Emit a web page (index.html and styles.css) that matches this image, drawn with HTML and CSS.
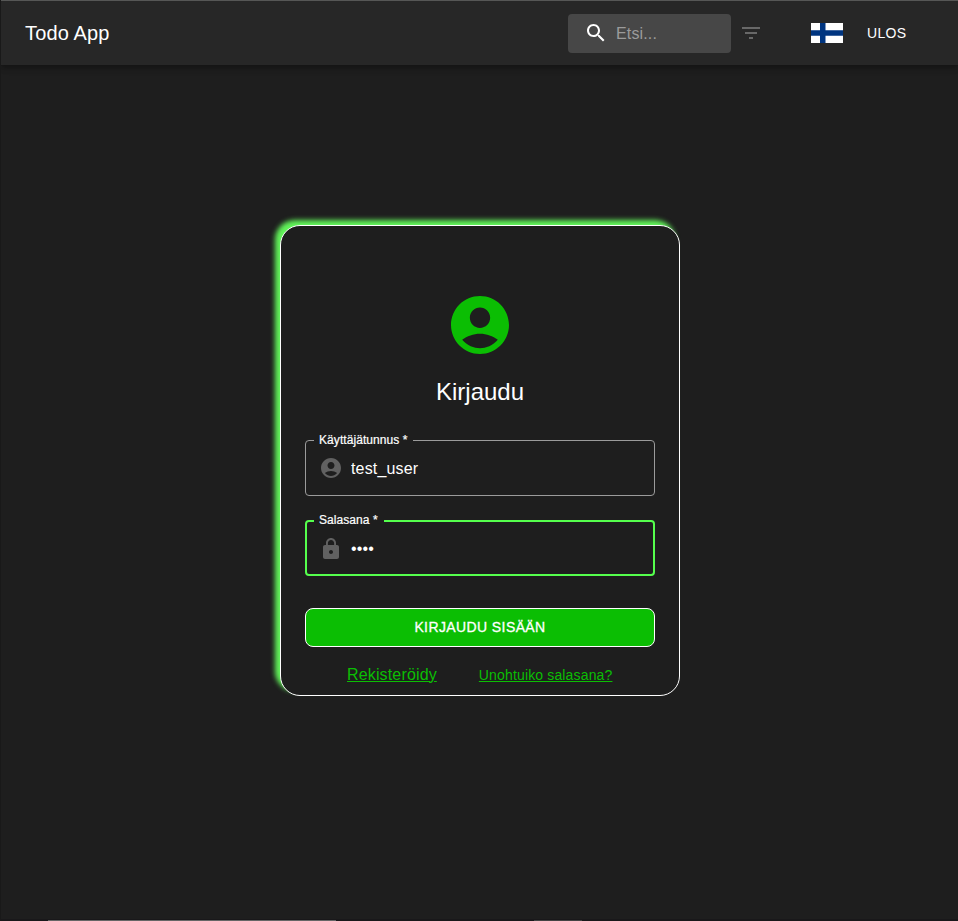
FILE: index.html
```html
<!DOCTYPE html>
<html lang="fi">
<head>
<meta charset="utf-8">
<title>Todo App</title>
<link rel="stylesheet" href="styles.css">
</head>
<body>
<header class="appbar">
  <h1 class="brand">Todo App</h1>
  <div class="search">
    <svg class="icon" viewBox="0 0 24 24"><path d="M15.5 14h-.79l-.28-.27C15.41 12.59 16 11.11 16 9.5 16 5.91 13.09 3 9.5 3S3 5.91 3 9.5 5.91 16 9.5 16c1.61 0 3.09-.59 4.23-1.57l.27.28v.79l5 4.99L20.49 19l-4.99-5zm-6 0C7.01 14 5 11.99 5 9.5S7.01 5 9.5 5 14 7.01 14 9.5 11.99 14 9.5 14z"/></svg>
    <span class="placeholder">Etsi...</span>
  </div>
  <svg class="icon filter" viewBox="0 0 24 24"><path d="M10 18h4v-2h-4v2zM3 6v2h18V6H3zm3 7h12v-2H6v2z"/></svg>
  <svg class="flag" viewBox="0 0 32 20"><path fill="#fff" d="M0 0h32v20H0z"/><path fill="#003580" d="M9 0h5.500v20H9zM0 7.300h32v5.400H0z"/></svg>
  <span class="logout">ULOS</span>
</header>
<main class="page">
  <section class="card">
    <svg class="avatar" viewBox="2 2 20 20"><path d="M12 2C6.480 2 2 6.480 2 12s4.480 10 10 10 10-4.480 10-10S17.520 2 12 2zm0 4c1.930 0 3.500 1.570 3.500 3.500S13.930 13 12 13s-3.500-1.570-3.500-3.500S10.070 6 12 6zm0 14c-2.030 0-4.430-.820-6.140-2.880C7.550 15.800 9.680 15 12 15s4.450.800 6.140 2.120C16.430 19.180 14.030 20 12 20z"/></svg>
    <h2 class="title">Kirjaudu</h2>
    <fieldset class="field">
      <legend>Käyttäjätunnus *</legend>
      <svg class="icon" viewBox="0 0 24 24"><path d="M12 2C6.480 2 2 6.480 2 12s4.480 10 10 10 10-4.480 10-10S17.520 2 12 2zm0 4c1.930 0 3.500 1.570 3.500 3.500S13.930 13 12 13s-3.500-1.570-3.500-3.500S10.070 6 12 6zm0 14c-2.030 0-4.430-.820-6.140-2.880C7.550 15.800 9.680 15 12 15s4.450.800 6.140 2.120C16.430 19.180 14.030 20 12 20z"/></svg>
      <span class="value">test_user</span>
    </fieldset>
    <fieldset class="field focused">
      <legend>Salasana *</legend>
      <svg class="icon" viewBox="0 0 24 24"><path d="M18 8h-1V6c0-2.760-2.240-5-5-5S7 3.240 7 6v2H6c-1.100 0-2 .900-2 2v10c0 1.100.900 2 2 2h12c1.100 0 2-.900 2-2V10c0-1.100-.900-2-2-2zm-6 9c-1.100 0-2-.900-2-2s.900-2 2-2 2 .900 2 2-.900 2-2 2zm3.100-9H8.900V6c0-1.710 1.390-3.100 3.100-3.100s3.100 1.390 3.100 3.100v2z"/></svg>
      <span>••••</span>
    </fieldset>
    <button class="submit">KIRJAUDU SISÄÄN</button>
    <div class="links">
      <a class="register">Rekisteröidy</a>
      <a class="forgot">Unohtuiko salasana?</a>
    </div>
  </section>
</main>
<footer class="edge"><i class="bar wide"></i><i class="bar"></i></footer>
</body>
</html>
```
FILE: styles.css
```css
* { box-sizing: border-box; }
body {
  margin: 0;
  height: 921px;
  display: flex;
  flex-direction: column;
  overflow: hidden;
  background: #1e1e1e;
  border-left: 1px solid #191919;
  color: #fff;
  font-family: "Liberation Sans", Arial, sans-serif;
}
.icon { width: 24px; height: 24px; fill: currentColor; flex: none; }
.appbar {
  height: 65px;
  flex: none;
  display: flex;
  align-items: center;
  padding: 0 51px 0 24px;
  background: #272727;
  border-top: 1px solid #565756;
  box-shadow: 0 2px 4px -1px rgba(0,0,0,.2), 0 4px 5px rgba(0,0,0,.14), 0 1px 10px rgba(0,0,0,.12);
}
.brand { margin: 0 auto 0 0; font-size: 20px; font-weight: 400; letter-spacing: .15px; }
.search {
  width: 163px;
  height: 39px;
  display: flex;
  align-items: center;
  gap: 8px;
  padding-left: 16px;
  border-radius: 4px;
  background: #474747;
}
.placeholder { padding-top: 1px; font-size: 16px; letter-spacing: .15px; color: #9b9b9b; }
.filter { margin-left: 8px; color: #686868; }
.flag { width: 32px; height: 20px; margin-left: 48px; }
.logout { width: 40px; margin-left: 24px; font-size: 14px; letter-spacing: .3px; }
.page { flex: 1; padding-top: 160px; }
.card {
  width: 400px;
  height: 471px;
  margin-left: 279px;
  padding: 70px 24px 0;
  display: flex;
  flex-direction: column;
  border: 1px solid #fff;
  border-radius: 20px;
  background: #1e1e1e;
  box-shadow: -5px -5px 5px #62f45a;
}
.avatar { width: 58px; height: 58px; align-self: center; fill: #0bbe03; }
.title { margin: 22px 0 25px; font-size: 24px; line-height: 32px; font-weight: 400; text-align: center; }
.field {
  height: 63px;
  flex: none;
  margin: 0 0 17px;
  padding: 8px 14px 0 13px;
  min-width: 0;
  display: flex;
  align-items: center;
  gap: 8px;
  border: 1px solid #9b9b9b;
  border-radius: 4px;
  font-size: 16px;
  line-height: 24px;
  letter-spacing: .15px;
}
.field legend { margin-left: -5px; padding: 0 5px; font-size: 12px; line-height: 14px; letter-spacing: .07px; -webkit-text-stroke: .2px #fff; }
.field .icon { color: #616161; }
.value { padding-top: 2px; }
.focused { border: 2px solid #55ff4d; padding: 8px 13px 0 12px; margin-bottom: 32px; }
.focused legend { padding: 0 6px 2px 5px; }
.submit {
  height: 39px;
  flex: none;
  padding: 0 0 2px;
  border: 1px solid #fff;
  border-radius: 8px;
  background: #0bbe03;
  color: #fff;
  font: 500 14px/24px "Liberation Sans", Arial, sans-serif;
  letter-spacing: .4px;
  -webkit-text-stroke: .3px #fff;
}
.links { display: flex; align-items: baseline; gap: 42px; margin: 19px 0 0 42px; color: #0bbe03; }
.links a { text-decoration: underline; text-decoration-thickness: 1px; text-underline-offset: 1px; }
.register { font-size: 16px; letter-spacing: .15px; }
.forgot { font-size: 14px; letter-spacing: .15px; }
.edge { height: 2px; flex: none; display: flex; align-items: flex-end; gap: 198px; padding-left: 47px; background: #19181a; }
.bar { width: 48px; height: 1px; background: #444; }
.wide { width: 288px; background: #666; }
```
